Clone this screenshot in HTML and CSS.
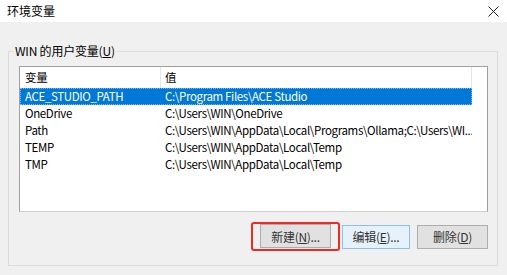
FILE: index.html
```html
<!DOCTYPE html>
<html lang="zh-CN">
<head>
    <meta charset="UTF-8">
    <meta name="viewport" content="width=device-width, initial-scale=1.0">
    <title>环境变量</title>
    <link rel="stylesheet" href="styles.css">
</head>
<body>

<div class="titlebar">
    <span class="title">环境变量</span>
    <svg class="close" width="11" height="11" viewBox="0 0 11 11">
        <path d="M0.5 0.5 L10.5 10.5 M10.5 0.5 L0.5 10.5" stroke="#222" stroke-width="1" fill="none"/>
    </svg>
</div>

<div class="main">
    <fieldset class="group">
        <legend>WIN 的用户变量(<u>U</u>)</legend>

        <div class="listview">
            <div class="row head">
                <div class="cell">变量</div>
                <div class="cell">值</div>
            </div>
            <div class="row selected">
                <div class="cell">ACE_STUDIO_PATH</div>
                <div class="cell">C:\Program Files\ACE Studio</div>
            </div>
            <div class="row">
                <div class="cell">OneDrive</div>
                <div class="cell">C:\Users\WIN\OneDrive</div>
            </div>
            <div class="row">
                <div class="cell">Path</div>
                <div class="cell">C:\Users\WIN\AppData\Local\Programs\Ollama;C:\Users\WI...</div>
            </div>
            <div class="row">
                <div class="cell">TEMP</div>
                <div class="cell">C:\Users\WIN\AppData\Local\Temp</div>
            </div>
            <div class="row">
                <div class="cell">TMP</div>
                <div class="cell">C:\Users\WIN\AppData\Local\Temp</div>
            </div>
        </div>

        <div class="buttons">
            <span class="highlight"><button class="btn">新建(<u>N</u>)...</button></span>
            <button class="btn focus">编辑(<u>E</u>)...</button>
            <button class="btn">删除(<u>D</u>)</button>
        </div>
    </fieldset>
    <div class="foot"></div>
</div>

</body>
</html>
```

FILE: styles.css
```css
body {
    margin: 0;
    font-family: "Noto Sans CJK SC", "Noto Sans", sans-serif;
    font-size: 12px;
    color: #000;
    background: #f0f0f0;
}
.titlebar {
    height: 22px;
    background: #fff;
    display: flex;
    align-items: center;
    justify-content: space-between;
    padding: 0 8px 0 7px;
}
.title {
    line-height: 22px;
}
.main {
    padding-top: 22px;
}
.group {
    margin: 0 9px 0 8px;
    padding: 8px 9px 14px 10px;
    border: 1px solid #dcdcdc;
}
.group legend {
    margin-left: -6px;
    padding: 0 2px;
    line-height: 14px;
    letter-spacing: -0.2px;
}
.listview {
    height: 144px;
    background: #fff;
    border: 1px solid #a0a0a0;
    border-bottom-color: #cfcfcf;
}
.row {
    display: grid;
    grid-template-columns: 141px 311px;
    width: 452px;
    height: 17px;
    line-height: 17px;
    white-space: nowrap;
    font-size: 11.5px;
    letter-spacing: -0.35px;
}
.row .cell {
    overflow: hidden;
    padding-left: 5px;
}
.row .cell + .cell {
    padding-left: 4px;
}
.row.head {
    height: 21px;
    line-height: 20px;
}
.row.head .cell {
    border-right: 1px solid #e5e5e5;
}
.row.selected {
    background: #0078d7;
    color: #fff;
    outline: 1px dotted #7fb7e8;
    outline-offset: -1px;
}
.buttons {
    display: flex;
    justify-content: flex-end;
    align-items: center;
    margin-top: 10px;
}
.btn {
    width: 71px;
    height: 24px;
    padding: 0;
    font-family: inherit;
    font-size: 12px;
    letter-spacing: -0.3px;
    color: #333;
    background: #e1e1e1;
    border: 1px solid #adadad;
}
.btn.focus {
    width: 68px;
    background: #e5f1fb;
    border-color: #8cc0ec;
    margin: 0 7px 0 2px;
}
.highlight {
    display: inline-block;
    padding: 0 7px 1px 7px;
    border: 2px solid #ee2a24;
    border-radius: 3px;
}
.foot {
    height: 10px;
}
```
